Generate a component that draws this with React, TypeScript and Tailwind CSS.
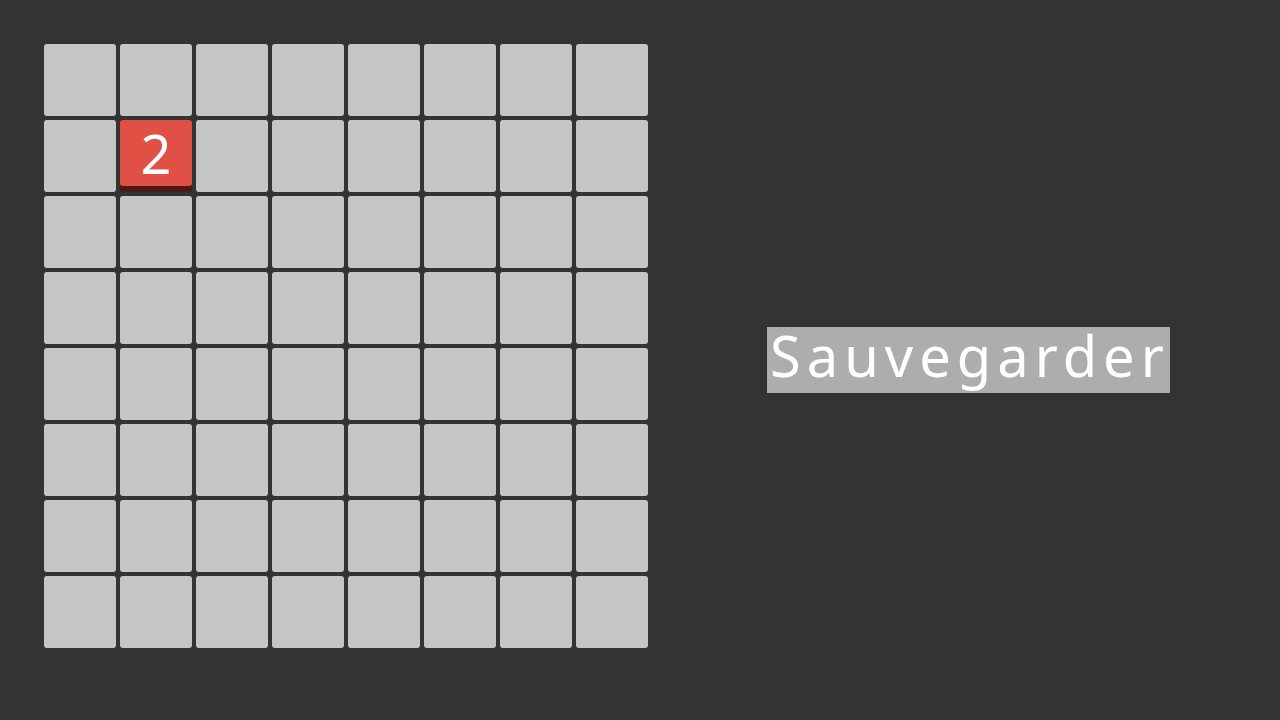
const ROWS = 8
const COLS = 8

// board state: one red "2" tile
const tiles: Record<string, number> = { "1-1": 2 }

export default function App() {
  return (
    <div className="w-[1280px] h-[720px] bg-[#333333] flex items-start" style={{ fontFamily: '"Noto Sans", sans-serif' }}>
      <div className="grid grid-cols-8 gap-[4px] ml-[44px] mt-[44px]">
        {Array.from({ length: ROWS * COLS }).map((_, i) => {
          const key = `${Math.floor(i / COLS)}-${i % COLS}`
          const v = tiles[key]
          if (v) {
            return (
              <div key={key} className="w-[72px] h-[72px] rounded-[3px] bg-[#4a1a17] pb-[6px]">
                <div className="h-full rounded-[3px] bg-[#e05045] flex items-center justify-center text-white text-[54px] leading-none">
                  {v}
                </div>
              </div>
            )
          }
          return <div key={key} className="w-[72px] h-[72px] rounded-[3px] bg-[#c6c6c6]" />
        })}
      </div>
      <div className="ml-[119px] mt-[327px]">
        <button className="h-[66px] pl-[3px] bg-[#adadad] text-white text-[56px] leading-none tracking-[6px] flex items-start">
          Sauvegarder
        </button>
      </div>
    </div>
  )
}
